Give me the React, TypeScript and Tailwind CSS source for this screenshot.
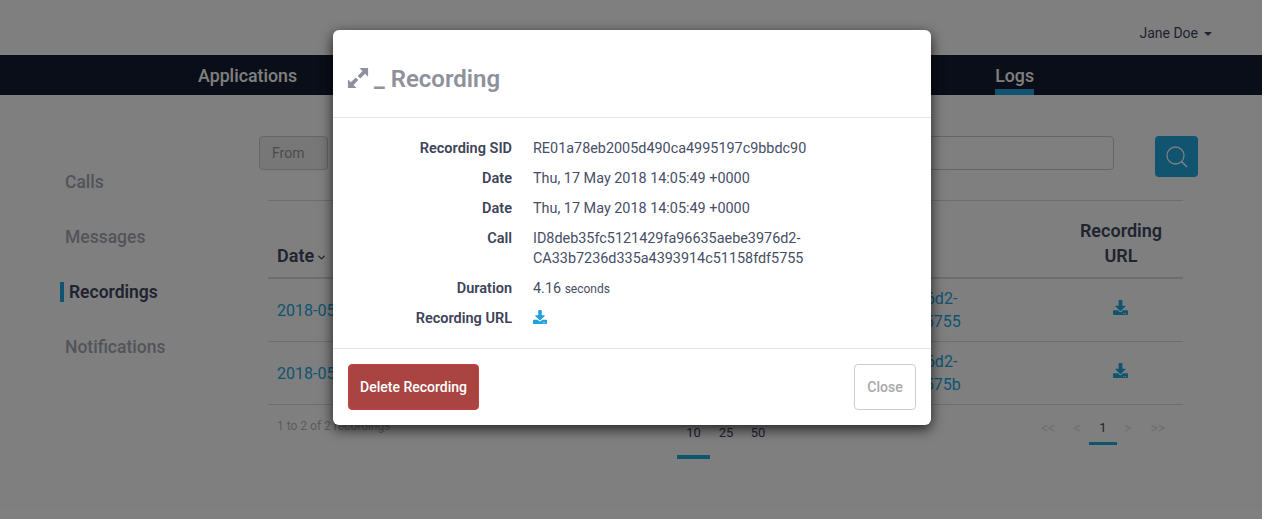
import React from 'react';
import { FaDownload } from 'react-icons/fa';
import { ChevronDown } from 'lucide-react';

const sideLinks = ['Calls', 'Messages', 'Recordings', 'Notifications'];

const tableRows = [
  ['2018-05-17 14:05:49', 'ID8deb35fc5121429fa96635aebe3976d2-', 'CA33b7236d335a4393914c51158fdf5755'],
  ['2018-05-17 14:02:13', 'ID8deb35fc5121429fa96635aebe3976d2-', 'CA33b7236d335a4393914c51158fdf575b'],
];

const Detail: React.FC<{ label: string; children: React.ReactNode }> = ({ label, children }) => (
  <div className="flex py-[5px] leading-[20px]">
    <div className="w-[179px] shrink-0 text-right text-[14.5px] font-semibold text-[#3d4459]">{label}</div>
    <div className="ml-[21px] w-[300px] text-[14.4px] text-[#474e66]">{children}</div>
  </div>
);

export default function App() {
  return (
    <div className="relative h-[519px] w-[1262px] overflow-hidden bg-white font-[Roboto,sans-serif]">
      <header className="flex h-[55px] items-center justify-end pr-[50px] pt-[11px] text-[14px] text-[#3f4660]">
        Jane Doe
        <span className="ml-[6px] mt-[1px] border-x-[4px] border-t-[4px] border-x-transparent border-t-[#3f4660]" />
      </header>

      <nav className="flex h-[40px] bg-[#141c30] pl-[198px] text-[17.8px] font-medium text-white">
        <span className="pt-[8px]">Applications</span>
        <span className="ml-[698px] h-[40px] border-b-[6px] border-[#20a8e0] pt-[8px]">Logs</span>
      </nav>

      <div className="flex">
        <aside className="w-[60px] shrink-0 pl-[60px] pt-[72px]">
          <ul className="w-[200px] space-y-[25px] text-[17.5px] font-medium leading-[30px] text-[#a4a8b3]">
            {sideLinks.map((link) =>
              link === 'Recordings' ? (
                <li key={link} className="flex items-center font-semibold text-[#414862]">
                  <span className="mr-[5px] h-[20px] w-[4px] bg-[#20a8e0]" />
                  {link}
                </li>
              ) : (
                <li key={link} className="pl-[5px]">
                  {link}
                </li>
              ),
            )}
          </ul>
        </aside>

        <main className="ml-[199px] w-[939px] pt-[41px]">
          <div className="flex items-start">
            <div className="flex h-[34px] w-[69px] items-center rounded-[4px] border border-[#ccc] bg-[#eee] pl-[12px] text-[14px] text-[#999]">
              From
            </div>
            <div className="ml-[372px] h-[34px] w-[414px] rounded-[4px] border border-[#ccc]" />
            <button className="ml-[41px] flex h-[41px] w-[43px] items-center justify-center rounded-[4px] bg-[#20a8e0]">
              <svg width="24" height="24" viewBox="0 0 24 24" fill="none" stroke="white" strokeWidth="1.3">
                <circle cx="10.5" cy="10.5" r="8.5" />
                <path d="M16.5 16.5 22 22" strokeWidth="1.6" />
              </svg>
            </button>
          </div>

          <div className="ml-[9px] mt-[23px] w-[915px] border-t border-[#ddd]">
            <div className="grid h-[78px] grid-cols-[392px_399px_124px] items-end border-b-2 border-[#ddd] pb-[9px] text-[18px] font-semibold leading-[25px] text-[#414862]">
              <div className="flex items-center pl-[9px]">
                Date <ChevronDown className="ml-[2px] mt-[3px] h-[11px] w-[11px]" strokeWidth={3} />
              </div>
              <div />
              <div className="text-center">
                Recording
                <br />
                URL
              </div>
            </div>
            {tableRows.map(([date, line1, line2]) => (
              <div
                key={line2}
                className="grid h-[63px] grid-cols-[392px_399px_124px] items-center border-b border-[#ddd] text-[16px] leading-[23px] text-[#20a8e0]"
              >
                <div className="pl-[9px]">{date}</div>
                <div>
                  {line1}
                  <br />
                  {line2}
                </div>
                <div className="flex justify-center pb-[5px] pr-[1px]">
                  <FaDownload className="h-[15px] w-[15px]" />
                </div>
              </div>
            ))}

            <div className="flex pt-[11px] text-[13px] leading-[20px]">
              <div className="w-[409px] pl-[9px] text-[12px] text-[#b5b8c0]">1 to 2 of 2 recordings</div>
              <div className="flex pt-[7px] text-[#414862]">
                <div className="h-[36px] w-[33px] border-b-4 border-[#20a8e0] text-center">10</div>
                <div className="w-[32px] text-center">25</div>
                <div className="w-[32px] text-center">50</div>
              </div>
              <div className="ml-[257px] flex h-[29px] text-center text-[14px] text-[#dcdcdc]">
                <div className="w-[34px] pt-[2px]">&lt;&lt;</div>
                <div className="w-[24px] pt-[2px]">&lt;</div>
                <div className="w-[28px] border-b-[3px] border-[#20a8e0] pt-[2px] text-[13px] text-[#414862]">1</div>
                <div className="w-[22px] pt-[2px]">&gt;</div>
                <div className="w-[38px] pt-[2px]">&gt;&gt;</div>
              </div>
            </div>
          </div>
        </main>
      </div>

      <div className="absolute inset-0 bg-black/50" />

      <div className="absolute left-[333px] top-[30px] h-[395px] w-[598px] rounded-[6px] bg-white shadow-[0_4px_13px_rgba(0,0,0,0.75)]">
        <div className="flex h-[88px] items-center border-b border-[#e5e5e5] pl-[14px] pt-[11px] text-[24px] font-semibold text-[#8e919b]">
          <svg width="22" height="22" viewBox="0 0 24 24" fill="currentColor" className="-mt-[2px]">
            <path d="M13.5 1H23v9.5l-3.2-3.2-5.3 5.3-2.9-2.9 5.3-5.3z" />
            <path d="M10.5 23H1v-9.5l3.2 3.2 5.3-5.3 2.9 2.9-5.3 5.3z" />
          </svg>
          <span className="ml-[5px] whitespace-pre">_ Recording</span>
        </div>
        <div className="h-[231px] border-b border-[#e5e5e5] pt-[16px]">
          <Detail label="Recording SID">RE01a78eb2005d490ca4995197c9bbdc90</Detail>
          <Detail label="Date">Thu, 17 May 2018 14:05:49 +0000</Detail>
          <Detail label="Date">Thu, 17 May 2018 14:05:49 +0000</Detail>
          <Detail label="Call">
            ID8deb35fc5121429fa96635aebe3976d2-
            <br />
            CA33b7236d335a4393914c51158fdf5755
          </Detail>
          <Detail label="Duration">
            4.16 <span className="text-[12px]">seconds</span>
          </Detail>
          <Detail label="Recording URL">
            <FaDownload className="mt-[1px] h-[14px] w-[14px] text-[#20a0dc]" />
          </Detail>
        </div>
        <div className="flex items-center justify-between pl-[15px] pr-[15px] pt-[15px]">
          <button className="h-[46px] w-[131px] rounded-[4px] border border-[#c9403c] bg-[#a94442] text-[14px] font-medium text-white">
            Delete Recording
          </button>
          <button className="h-[46px] w-[62px] rounded-[4px] border border-[#ccc] bg-white text-[14px] font-medium text-[#a9a9a9]">
            Close
          </button>
        </div>
      </div>
    </div>
  );
}
